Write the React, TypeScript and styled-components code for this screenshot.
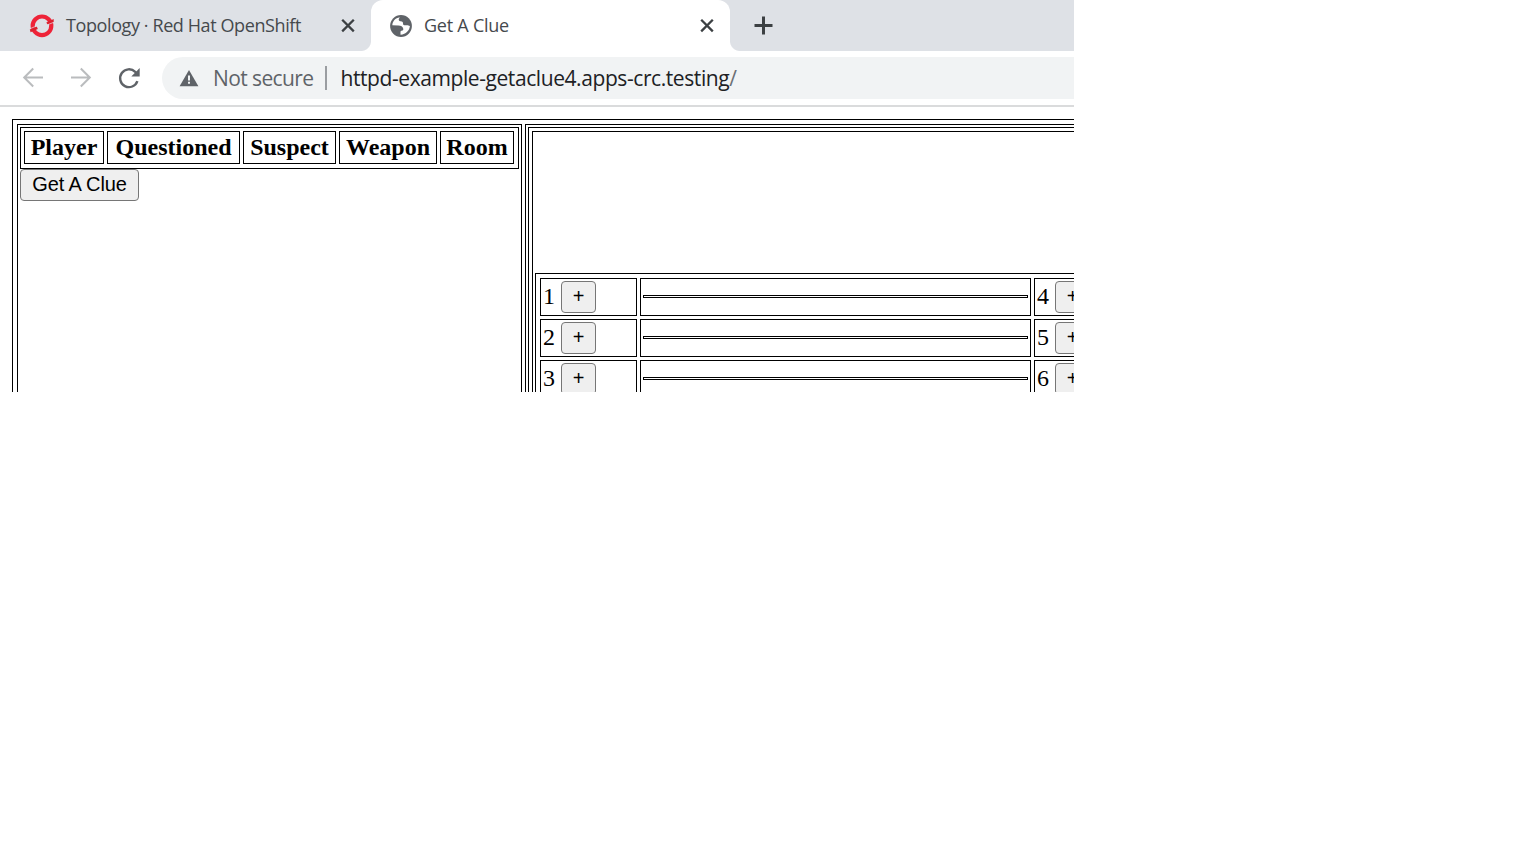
import React from "react";
import styled, { createGlobalStyle } from "styled-components";

const GlobalStyle = createGlobalStyle`
  *, *::before, *::after { box-sizing: border-box; }
  body { margin: 0; background: #fff; }
`;

const Window = styled.div`
  width: 1074px;
  height: 392px;
  overflow: hidden;
  display: flex;
  flex-direction: column;
  background: #fff;
`;

const TabStrip = styled.div`
  display: flex;
  flex: none;
  height: 51px;
  background: #dee1e6;
  font-family: "Open Sans", "Noto Sans", sans-serif;
`;

const Tab = styled.div<{ $active?: boolean; $width: number; $left: number }>`
  position: relative;
  display: flex;
  align-items: center;
  width: ${(p) => p.$width}px;
  height: 51px;
  padding-left: ${(p) => p.$left}px;
  padding-right: 14px;
  border-radius: 12px 12px 0 0;
  background: ${(p) => (p.$active ? "#fff" : "transparent")};

  &::before,
  &::after {
    content: "";
    display: ${(p) => (p.$active ? "block" : "none")};
    position: absolute;
    bottom: 0;
    width: 10px;
    height: 10px;
  }
  &::before {
    left: -10px;
    background: radial-gradient(circle at 0 0, transparent 9.5px, #fff 10.5px);
  }
  &::after {
    right: -10px;
    background: radial-gradient(circle at 100% 0, transparent 9.5px, #fff 10.5px);
  }
`;

const TabTitle = styled.span<{ $spacing: number }>`
  flex: 1;
  margin-left: 12px;
  padding-bottom: 2px;
  font-size: 18px;
  line-height: 24px;
  white-space: nowrap;
  color: #45494d;
  letter-spacing: ${(p) => p.$spacing}px;
`;

const Icon = styled.svg`
  display: block;
  flex: none;
`;

const NewTab = styled.div`
  display: flex;
  align-items: center;
  padding-left: 23px;
`;

const Toolbar = styled.div`
  display: flex;
  flex: none;
  align-items: center;
  height: 56px;
  padding-left: 21px;
  border-bottom: 2px solid #dadbdc;
  font-family: "Open Sans", "Noto Sans", sans-serif;
`;

const NavIcons = styled.div`
  display: flex;
  gap: 24px;
  width: 141px;
`;

const AddressBar = styled.div`
  display: flex;
  flex: 1;
  align-items: center;
  height: 42px;
  padding-left: 17px;
  border-radius: 21px 0 0 21px;
  background: #f1f3f4;
  font-size: 21px;
  line-height: 28px;
  white-space: nowrap;
`;

const Security = styled.span`
  width: 101px;
  margin-left: 14px;
  color: #5f6368;
  letter-spacing: -0.6px;
`;

const Separator = styled.span`
  width: 2px;
  height: 24px;
  margin: 0 13.5px 0 11px;
  background: #9a9da1;
`;

const Url = styled.span`
  color: #202124;
  letter-spacing: -0.42px;
`;

const UrlPath = styled.span`
  color: #6b6f74;
`;

const Page = styled.main`
  flex: 1;
  min-height: 0;
  padding: 12px 0 0 12px;
  overflow: hidden;
  color: #000;
  font-family: "Liberation Serif", "Times New Roman", serif;
  font-size: 24px;
`;

const OuterTable = styled.div`
  display: flex;
  gap: 3px;
  width: 1500px;
  height: 600px;
  padding: 4px;
  border: 1px solid #000;
`;

const OuterCell = styled.div<{ $width: number }>`
  flex: none;
  width: ${(p) => p.$width}px;
  padding: 2px;
  border: 1px solid #000;
`;

const ClueTable = styled.div`
  display: flex;
  gap: 3px;
  width: 499px;
  height: 42px;
  padding: 3px;
  border: 1px solid #000;
`;

const HeadCell = styled.div<{ $width: number }>`
  width: ${(p) => p.$width}px;
  height: 33px;
  border: 1px solid #000;
  font-weight: bold;
  line-height: 31px;
  text-align: center;
`;

const Button = styled.button<{ $width: number }>`
  flex: none;
  width: ${(p) => p.$width}px;
  height: 32px;
  padding: 0 0 2px;
  border: 1px solid #767676;
  border-radius: 4px;
  background: #efefef;
  color: #000;
  font-family: "Liberation Sans", Arial, sans-serif;
  font-size: 20px;
  line-height: 28px;
  display: block;
  letter-spacing: -0.1px;
`;

const BoardTable = styled.div`
  height: 560px;
  padding: 3px;
  border: 1px solid #000;
`;

const BoardCell = styled.div`
  height: 540px;
  padding: 141px 2px 0;
  border: 1px solid #000;
`;

const PlayerTable = styled.div`
  display: grid;
  grid-template-columns: 97px 391px 97px 391px;
  grid-auto-rows: 38px;
  gap: 3px;
  padding: 4px;
  border: 1px solid #000;
`;

const PlayerCell = styled.div`
  display: flex;
  align-items: center;
  padding: 0 2px;
  border: 1px solid #000;
`;

const PlayerNumber = styled.span`
  width: 18px;
  padding-bottom: 2px;
  line-height: 32px;
`;

const EmptyTable = styled.div`
  flex: 1;
  height: 3px;
  margin-bottom: 1px;
  border: 1px solid #000;
`;

const CloseIcon = () => (
  <Icon width="18" height="18" viewBox="0 0 18 18" fill="none" stroke="#3c4043" strokeWidth="2.3">
    <path d="M3.2 2.8 14.8 14.4M14.8 2.8 3.2 14.4" />
  </Icon>
);

const OpenShiftIcon = () => (
  <Icon width="25" height="25" viewBox="0 0 25 25" fill="none">
    <circle cx="13" cy="12.8" r="9.3" stroke="#ee2338" strokeWidth="4.2" />
    <path d="M17.300 9.400 24.700 6 24.700 9 18.500 11.500Z" fill="#db212e" />
    <path d="M.8 16.400 7.800 13.600 8.800 16 1.600 19.300Z" fill="#db212e" />
    <path d="M18 12 24.500 9.400M1 15.700 7.800 12.900" stroke="#dee1e6" strokeWidth=".7" />
  </Icon>
);

const GlobeIcon = () => (
  <Icon width="22" height="22" viewBox="0 0 22 22">
    <circle cx="11" cy="11" r="10.9" fill="#5f6368" />
    <path
      fill="#fff"
      d="M2.300 10.200C2.500 6.300 5.200 3.100 9.800 2.300 8.800 3.500 8.500 4.600 9 5.500c.6.900 1.500.8 2.700.9 1 .1 1.400.9 1.300 2 0 1.400.9 1.900 2.400 1.900h1.700c1 0 1.500.7 2.800.7-.3 4.400-3.800 8.200-9.400 8.800v-2.900c0-.9.5-1.200 1.200-1.200 1.300-.2 1.900-1 1.500-2.300-.5-2-2.100-2.900-4.800-3Z"
    />
  </Icon>
);

const BackIcon = () => (
  <Icon width="24" height="24" viewBox="0 0 24 24" fill="none" stroke="#babcbe" strokeWidth="2">
    <path d="M22 11.5H3.5M12.2 2.5 3.2 11.5l9 9" />
  </Icon>
);

const ForwardIcon = () => (
  <Icon width="24" height="24" viewBox="0 0 24 24" fill="none" stroke="#babcbe" strokeWidth="2">
    <path d="M2 11.5h18.5M11.8 2.5 20.8 11.5l-9 9" />
  </Icon>
);

const ReloadIcon = () => (
  <Icon width="24" height="24" viewBox="0 0 24 24" fill="none">
    <path d="M20.4 15.2A8.9 8.9 0 1 1 18.2 5.8l1.6 1.8" stroke="#5f6368" strokeWidth="2.4" />
    <path d="M22.7 2v8.4h-8.4Z" fill="#5f6368" />
  </Icon>
);

const WarningIcon = () => (
  <Icon width="20" height="18" viewBox="0 0 20 18">
    <path d="M10 1 19.4 17.3H.6Z" fill="#5f6368" />
    <path d="M9 6.6h2v4.8H9ZM9 12.7h2v2H9Z" fill="#f1f3f4" />
  </Icon>
);

const headings = [
  { label: "Player", width: 80 },
  { label: "Questioned", width: 133 },
  { label: "Suspect", width: 93 },
  { label: "Weapon", width: 98 },
  { label: "Room", width: 74 },
];

const rows = [
  [1, 4],
  [2, 5],
  [3, 6],
];

export default function App() {
  return (
    <>
      <GlobalStyle />
      <Window>
        <TabStrip>
          <Tab $width={371} $left={29}>
            <OpenShiftIcon />
            <TabTitle $spacing={-0.4}>Topology · Red Hat OpenShift</TabTitle>
            <CloseIcon />
          </Tab>
          <Tab $active $width={359} $left={19}>
            <GlobeIcon />
            <TabTitle $spacing={-0.24}>Get A Clue</TabTitle>
            <CloseIcon />
          </Tab>
          <NewTab>
            <Icon width="20" height="20" viewBox="0 0 20 20" stroke="#3c4043" strokeWidth="3">
              <path d="M1.5 9.5h18M10.5 .5v18" />
            </Icon>
          </NewTab>
        </TabStrip>
        <Toolbar>
          <NavIcons>
            <BackIcon />
            <ForwardIcon />
            <ReloadIcon />
          </NavIcons>
          <AddressBar>
            <WarningIcon />
            <Security>Not secure</Security>
            <Separator />
            <Url>
              httpd-example-getaclue4.apps-crc.testing<UrlPath>/</UrlPath>
            </Url>
          </AddressBar>
        </Toolbar>
        <Page>
          <OuterTable>
            <OuterCell $width={505}>
              <ClueTable>
                {headings.map((h) => (
                  <HeadCell key={h.label} $width={h.width}>
                    {h.label}
                  </HeadCell>
                ))}
              </ClueTable>
              <Button $width={119}>Get A Clue</Button>
            </OuterCell>
            <OuterCell $width={1007}>
              <BoardTable>
                <BoardCell>
                  <PlayerTable>
                    {rows.map((row) =>
                      row.map((n) => (
                        <React.Fragment key={n}>
                          <PlayerCell>
                            <PlayerNumber>{n}</PlayerNumber>
                            <Button $width={35}>+</Button>
                          </PlayerCell>
                          <PlayerCell>
                            <EmptyTable />
                          </PlayerCell>
                        </React.Fragment>
                      )),
                    )}
                  </PlayerTable>
                </BoardCell>
              </BoardTable>
            </OuterCell>
          </OuterTable>
        </Page>
      </Window>
    </>
  );
}
